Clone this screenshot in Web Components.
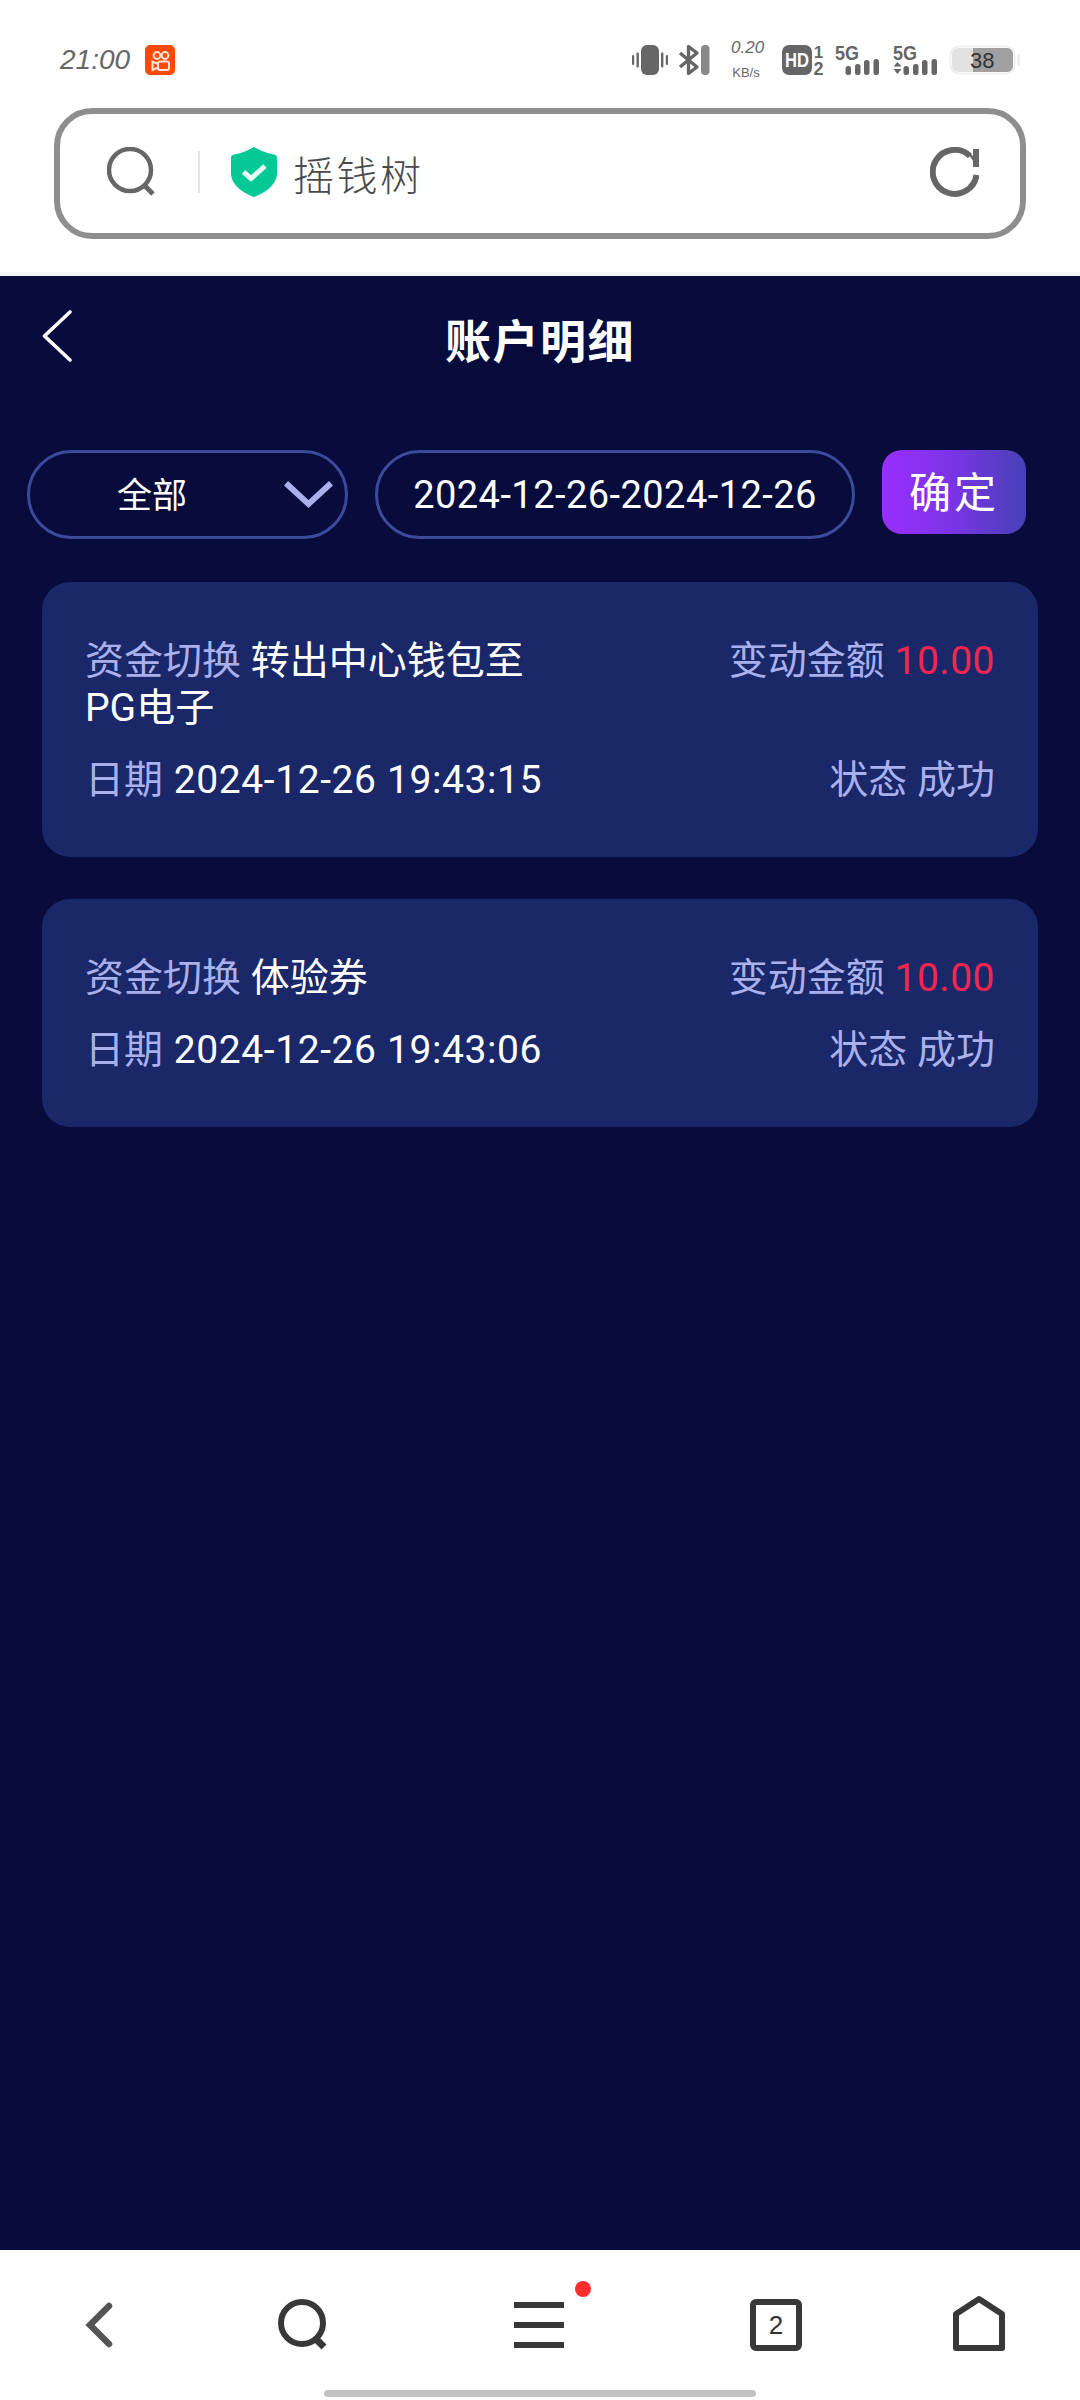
<!DOCTYPE html>
<html lang="zh">
<head>
<meta charset="utf-8">
<title>账户明细</title>
<style>
    html, body { margin: 0; padding: 0; }
    body {
        width: 1080px;
        height: 2400px;
        overflow: hidden;
        display: flex;
        flex-direction: column;
        background: #fff;
        font-family: Roboto, "Noto Sans CJK SC", sans-serif;
    }
</style>
</head>
<body>
<status-bar></status-bar>
<browser-bar>摇钱树</browser-bar>
<account-page>
    <page-header>账户明细</page-header>
    <filter-bar category="全部" range="2024-12-26-2024-12-26" action="确定"></filter-bar>
    <record-card date="2024-12-26 19:43:15" amount="10.00" status="成功">转出中心钱包至<br>PG电子</record-card>
    <record-card date="2024-12-26 19:43:06" amount="10.00" status="成功">体验券</record-card>
</account-page>
<bottom-nav tabs="2"></bottom-nav>

<script>
class StatusBar extends HTMLElement {
    constructor() {
        super();
        this.attachShadow({ mode: "open" });
    }

    connectedCallback() {
        const signal = `
            <rect x="10.5" y="21" width="5.5" height="9" rx="2.5"/>
            <rect x="20" y="19" width="5.5" height="11" rx="2.5"/>
            <rect x="29" y="15" width="5.5" height="15" rx="2.5"/>
            <rect x="38.5" y="14" width="5.5" height="16" rx="2.5"/>`;
        this.shadowRoot.innerHTML = `
        <style>
            :host {
                display: flex;
                height: 108px;
                box-sizing: border-box;
                padding: 45px 60px 0 60px;
                color: #666;
                font-family: "Liberation Sans", sans-serif;
            }
            svg { display: block; flex: none; overflow: visible; }
            text { font-family: "Liberation Sans", sans-serif; }
            .time {
                width: 85px;
                height: 30px;
                line-height: 30px;
                font-size: 28px;
                font-style: italic;
            }
            .icons { margin-left: auto; display: flex; }
            .speed {
                width: 30px;
                margin: 0 21px 0 22px;
                text-align: center;
                position: relative;
                top: -6px;
                height: 36px;
            }
            .speed div { font-style: italic; font-size: 17px; line-height: 17px; white-space: nowrap; }
            .speed div + div { font-style: normal; font-size: 13px; line-height: 15px; margin-top: 9px; }
        </style>
        <div class="time">21:00</div>
        <svg width="30" height="30" viewBox="0 0 30 30">
            <rect width="30" height="30" rx="5" fill="#ff4906"/>
            <g fill="none" stroke="#ffe6d8" stroke-width="2">
                <circle cx="12" cy="10.5" r="3.4"/>
                <circle cx="20" cy="10.5" r="3.4"/>
                <rect x="13" y="16.5" width="11" height="8.5" rx="2"/>
                <path d="M13 19 L7.5 16.5 V25 L13 22.5"/>
            </g>
        </svg>
        <div class="icons">
            <svg width="36" height="30" viewBox="0 0 36 30" fill="#666">
                <rect x="9" width="18" height="30" rx="6"/>
                <rect x="0" y="10" width="2.2" height="10" rx="1"/>
                <rect x="4.5" y="7.5" width="2.4" height="15" rx="1"/>
                <rect x="29" y="7.5" width="2.4" height="15" rx="1"/>
                <rect x="33.8" y="10" width="2.2" height="10" rx="1"/>
            </svg>
            <svg width="31" height="30" viewBox="0 0 31 30" style="margin-left:10px">
                <path d="M2 8 L19 22 L10.5 28.5 V1.5 L19 8 L2 22" fill="none" stroke="#666" stroke-width="3.4" stroke-linejoin="round"/>
                <rect x="23" width="8.5" height="30" rx="4" fill="#888"/>
            </svg>
            <div class="speed"><div>0.20</div><div>KB/s</div></div>
            <svg width="42" height="30" viewBox="0 0 42 30" fill="#666">
                <rect width="30" height="30" rx="7"/>
                <text x="15" y="22" text-anchor="middle" font-size="20" font-weight="700" fill="#fff" textLength="24" lengthAdjust="spacingAndGlyphs">HD</text>
                <text x="36.5" y="13" text-anchor="middle" font-size="17" font-weight="700">1</text>
                <text x="36.5" y="29.5" text-anchor="middle" font-size="18" font-weight="700">2</text>
            </svg>
            <svg width="45" height="30" viewBox="0 0 45 30" fill="#666" style="margin-left:11px">
                <text x="0" y="15" font-size="20" font-weight="700" textLength="24" lengthAdjust="spacingAndGlyphs">5G</text>
                ${signal}
            </svg>
            <svg width="45" height="30" viewBox="0 0 45 30" fill="#666" style="margin-left:13px">
                <text x="0" y="15" font-size="20" font-weight="700" textLength="24" lengthAdjust="spacingAndGlyphs">5G</text>
                ${signal}
                <path d="M4.5 17 L8.5 21.5 H0.5 Z M0.5 24 H8.5 L4.5 29 Z"/>
            </svg>
            <svg width="70" height="30" viewBox="0 0 70 30" style="margin-left:12px">
                <rect x="0.5" y="1.5" width="64" height="27" rx="8" fill="#fff" stroke="#f0f0f0" stroke-width="2"/>
                <rect x="2" y="3" width="61" height="24" rx="6" fill="#e2e2e2"/>
                <path d="M23 3 H57 A6 6 0 0 1 63 9 V21 A6 6 0 0 1 57 27 H23 Z" fill="#a0a0a0"/>
                <text x="20" y="23" font-size="22" fill="#333">38</text>
                <rect x="67" y="9" width="3" height="12" rx="1.5" fill="#eee"/>
            </svg>
        </div>
        `;
    }
}

class BrowserBar extends HTMLElement {
    constructor() {
        super();
        this.attachShadow({ mode: "open" });
    }

    connectedCallback() {
        this.shadowRoot.innerHTML = `
        <style>
            :host {
                display: block;
                box-sizing: border-box;
                height: 168px;
                padding: 0 54px 33px;
                border-bottom: 4px solid #f3f4f6;
            }
            .bar {
                height: 131px;
                box-sizing: border-box;
                border: 6px solid #8e8e8e;
                border-radius: 38px;
                display: flex;
                align-items: center;
                padding: 0 41px 3px 47px;
            }
            svg { display: block; flex: none; }
            .divider { width: 2px; height: 42px; background: #e4e4e4; margin: 0 31px 0 41px; flex: none; }
            .site {
                margin-left: 16px;
                margin-top: 1px;
                font-size: 41px;
                line-height: 50px;
                color: #4a4a4a;
                font-family: "Noto Sans CJK SC", sans-serif;
                font-weight: 300;
                letter-spacing: 2.5px;
            }
            .reload { margin-left: auto; }
        </style>
        <div class="bar">
            <svg width="50" height="50" viewBox="0 0 50 50" fill="none" stroke="#666">
                <circle cx="23" cy="23" r="21" stroke-width="4.5"/>
                <path d="M37 38 L46 47" stroke-width="5"/>
            </svg>
            <div class="divider"></div>
            <svg width="46" height="50" viewBox="0 0 46 50">
                <path d="M23 0 C30 4 37 6.5 43 7.5 Q46 8 46 11 V26 C46 38 34 46 23 50 C12 46 0 38 0 26 V11 Q0 8 3 7.5 C9 6.5 16 4 23 0 Z" fill="#04c997"/>
                <path d="M12.5 25 L20 31.5 L34 19" fill="none" stroke="#e6fbf5" stroke-width="5"/>
            </svg>
            <span class="site"><slot></slot></span>
            <svg class="reload" width="49" height="50" viewBox="0 0 49 50" fill="none">
                <path d="M46.5 28 A22 22 0 1 1 40 9" stroke="#666" stroke-width="6"/>
                <rect x="43" y="2" width="6" height="18" fill="#666"/>
                <path d="M37 5 L43 9 V14 Z" fill="#666"/>
            </svg>
        </div>
        `;
    }
}

class AccountPage extends HTMLElement {
    constructor() {
        super();
        this.attachShadow({ mode: "open" });
    }

    connectedCallback() {
        this.shadowRoot.innerHTML = `
        <style>
            :host {
                display: flex;
                flex-direction: column;
                flex: 1;
                min-height: 0;
                background: #070c3c;
                color: #fff;
            }
        </style>
        <slot></slot>
        `;
    }
}

class PageHeader extends HTMLElement {
    constructor() {
        super();
        this.attachShadow({ mode: "open" });
    }

    connectedCallback() {
        this.shadowRoot.innerHTML = `
        <style>
            :host {
                display: grid;
                grid-template-columns: 1fr auto 1fr;
                align-items: center;
                height: 130px;
                padding-left: 41px;
                padding-right: 41px;
                margin-bottom: 44px;
            }
            svg { display: block; margin-bottom: 10px; }
            h1 {
                margin: 0 0 6px;
                font-size: 46px;
                line-height: 60px;
                font-weight: 700;
                font-family: "Noto Sans CJK SC", sans-serif;
                letter-spacing: 1.5px;
                color: #fff;
            }
        </style>
        <svg width="32" height="54" viewBox="0 0 32 54" fill="none">
            <path d="M29 3 L3.5 27 L29 51" stroke="#fff" stroke-width="3.6" stroke-linecap="round" stroke-linejoin="round"/>
        </svg>
        <h1><slot></slot></h1>
        <span></span>
        `;
    }
}

class FilterBar extends HTMLElement {
    constructor() {
        super();
        this.attachShadow({ mode: "open" });
    }

    connectedCallback() {
        this.shadowRoot.innerHTML = `
        <style>
            :host {
                display: flex;
                align-items: flex-start;
                gap: 27px;
                padding: 0 54px 0 27px;
                margin-bottom: 43px;
            }
            .pill {
                box-sizing: border-box;
                height: 89px;
                border: 3px solid #3c4a9c;
                border-radius: 45px;
                display: flex;
                align-items: center;
                font-size: 38px;
                color: #fff;
                flex: none;
            }
            .select { width: 321px; padding: 0 0 5px 87px; position: relative; font-size: 35px; }
            .select svg { position: absolute; right: 12px; top: 28px; }
            .range { width: 480px; justify-content: center; white-space: nowrap; letter-spacing: 0.45px; }
            button {
                flex: none;
                width: 144px;
                height: 84px;
                border: 0;
                padding: 0 0 5px;
                border-radius: 20px;
                background: linear-gradient(90deg, #9a2eff 0%, #7d34e8 45%, #4840b8 100%);
                color: #fff;
                font-family: inherit;
                font-size: 42px;
                letter-spacing: 3px;
            }
        </style>
        <div class="pill select">
            <span>${this.getAttribute("category")}</span>
            <svg width="49" height="27" viewBox="0 0 49 27">
                <path d="M4 0 L24.5 19 L45 0 L49 4.5 L24.5 27 L0 4.5 Z" fill="#a9b0ec"/>
            </svg>
        </div>
        <div class="pill range">${this.getAttribute("range")}</div>
        <button>${this.getAttribute("action")}</button>
        `;
    }
}

class RecordCard extends HTMLElement {
    constructor() {
        super();
        this.attachShadow({ mode: "open" });
    }

    connectedCallback() {
        this.shadowRoot.innerHTML = `
        <style>
            :host {
                display: grid;
                grid-template-columns: 445px 1fr;
                row-gap: 25px;
                margin: 0 42px 42px;
                padding: 56px 43px 53px;
                border-radius: 28px;
                background: #1a2869;
                font-size: 39px;
                line-height: 47px;
                color: #fff;
            }
            .label { color: #a9b0ec; }
            .date { white-space: nowrap; letter-spacing: 0.6px; margin-left: 1px; }
            .amount { color: #f5254f; letter-spacing: 0.5px; }
            .right { text-align: right; white-space: nowrap; }
        </style>
        <div><span class="label">资金切换</span> <slot></slot></div>
        <div class="right"><span class="label">变动金额</span> <span class="amount">${this.getAttribute("amount")}</span></div>
        <div style="white-space:nowrap"><span class="label">日期</span> <span class="date">${this.getAttribute("date")}</span></div>
        <div class="right"><span class="label">状态</span> <span class="label">${this.getAttribute("status")}</span></div>
        `;
    }
}

class BottomNav extends HTMLElement {
    constructor() {
        super();
        this.attachShadow({ mode: "open" });
    }

    connectedCallback() {
        this.shadowRoot.innerHTML = `
        <style>
            :host {
                display: block;
                height: 150px;
                box-sizing: border-box;
                padding-top: 45px;
                background: #fff;
                overflow: hidden;
            }
            .icons {
                display: grid;
                grid-template-columns: 198px 208px 266px 208px 198px;
                justify-items: center;
                height: 60px;
            }
            svg { display: block; }
            .menu { position: relative; width: 50px; height: 60px; }
            .dot {
                position: absolute;
                left: 61px;
                top: -14px;
                width: 16px;
                height: 16px;
                border-radius: 50%;
                background: #ff2d2d;
            }
            .home-bar {
                width: 432px;
                height: 7px;
                margin: 35px auto 0;
                border-radius: 4px;
                background: #c2c2c2;
            }
            text { font-family: "Liberation Sans", sans-serif; }
        </style>
        <div class="icons">
            <svg width="60" height="60" viewBox="0 0 60 60" fill="none">
                <path d="M40 11 L21 30 L40 49" stroke="#555" stroke-width="6.5" stroke-linejoin="miter" stroke-linecap="round"/>
            </svg>
            <svg width="60" height="60" viewBox="0 0 60 60" fill="none" stroke="#383838">
                <circle cx="30" cy="28" r="21" stroke-width="6"/>
                <path d="M44 44 L52 52" stroke-width="7"/>
            </svg>
            <div class="menu">
                <svg width="50" height="60" viewBox="0 0 50 60" fill="#383838">
                    <rect y="7" width="50" height="6"/>
                    <rect y="27" width="50" height="6"/>
                    <rect y="47" width="50" height="6"/>
                </svg>
                <span class="dot"></span>
            </div>
            <svg width="60" height="60" viewBox="0 0 60 60">
                <rect x="7" y="7" width="46" height="46" rx="3" fill="none" stroke="#383838" stroke-width="6"/>
                <text x="30" y="39" text-anchor="middle" font-size="26" fill="#333">${this.getAttribute("tabs")}</text>
            </svg>
            <svg width="60" height="60" viewBox="0 0 60 60" fill="none">
                <path d="M7 53 V19 L30 4 L53 19 V53 Z" stroke="#383838" stroke-width="6" stroke-linejoin="round"/>
            </svg>
        </div>
        <div class="home-bar"></div>
        `;
    }
}

customElements.define("status-bar", StatusBar);
customElements.define("browser-bar", BrowserBar);
customElements.define("account-page", AccountPage);
customElements.define("page-header", PageHeader);
customElements.define("filter-bar", FilterBar);
customElements.define("record-card", RecordCard);
customElements.define("bottom-nav", BottomNav);
</script>
</body>
</html>
